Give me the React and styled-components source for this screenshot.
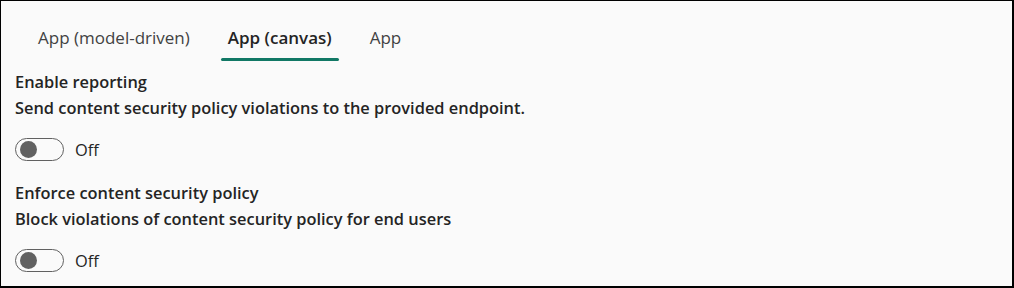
import React, { useState } from 'react'
import styled, { createGlobalStyle } from 'styled-components'

const Global = createGlobalStyle`
  html, body { margin: 0; padding: 0; background: #fafafa; }
  * { box-sizing: border-box; }
`

const Frame = styled.div`
  width: 1014px;
  height: 288px;
  overflow: hidden;
  background: #fafafa;
  border-style: solid;
  border-color: #000;
  border-width: 1px 2px 2px 1px;
  padding: 0 14px;
  font-family: 'Open Sans', 'Noto Sans', sans-serif;
  color: #242424;
`

const TabList = styled.div`
  display: flex;
  margin: 12px 0 8px 4px;
`

const Tab = styled.button`
  position: relative;
  height: 48px;
  padding: 0 19px;
  display: flex;
  align-items: center;
  border: none;
  background: transparent;
  font-family: inherit;
  font-size: 17px;
  font-weight: ${p => (p.$active ? 600 : 400)};
  color: ${p => (p.$active ? '#242424' : '#424242')};
  cursor: pointer;

  &::after {
    content: '';
    display: ${p => (p.$active ? 'block' : 'none')};
    position: absolute;
    left: 12px;
    right: 12px;
    bottom: 0;
    height: 3px;
    border-radius: 2px;
    background: #117865;
  }
`

const Section = styled.div`
  margin-bottom: 19px;
`

const Label = styled.div`
  font-size: 16.4px;
  font-weight: 600;
  line-height: 25px;
  white-space: nowrap;
`

const Title = styled(Label)`
  line-height: 26px;
`

const ToggleRow = styled.label`
  display: flex;
  align-items: center;
  gap: 11px;
  margin-top: 18px;
  font-size: 16.4px;
  line-height: 23px;
  cursor: pointer;
`

const Track = styled.span`
  display: flex;
  align-items: center;
  width: 49px;
  height: 23px;
  padding: 0 4px;
  border: 1px solid ${p => (p.$on ? '#117865' : '#616161')};
  border-radius: 12px;
  background: ${p => (p.$on ? '#117865' : 'transparent')};
  justify-content: ${p => (p.$on ? 'flex-end' : 'flex-start')};
`

const Thumb = styled.span`
  width: 17px;
  height: 17px;
  border-radius: 50%;
  background: ${p => (p.$on ? '#fff' : '#616161')};
`

const Toggle = ({ on, onClick }) => (
  <ToggleRow onClick={onClick}>
    <Track $on={on}>
      <Thumb $on={on} />
    </Track>
    {on ? 'On' : 'Off'}
  </ToggleRow>
)

const tabs = ['App (model-driven)', 'App (canvas)', 'App']

export default function App() {
  const [active, setActive] = useState(1)
  const [reporting, setReporting] = useState(false)
  const [enforce, setEnforce] = useState(false)

  return (
    <>
      <Global />
      <Frame>
        <TabList>
          {tabs.map((t, i) => (
            <Tab key={t} $active={i === active} onClick={() => setActive(i)}>
              {t}
            </Tab>
          ))}
        </TabList>
        <Section>
          <Title>Enable reporting</Title>
          <Label>Send content security policy violations to the provided endpoint.</Label>
          <Toggle on={reporting} onClick={() => setReporting(!reporting)} />
        </Section>
        <Section>
          <Title>Enforce content security policy</Title>
          <Label>Block violations of content security policy for end users</Label>
          <Toggle on={enforce} onClick={() => setEnforce(!enforce)} />
        </Section>
      </Frame>
    </>
  )
}
